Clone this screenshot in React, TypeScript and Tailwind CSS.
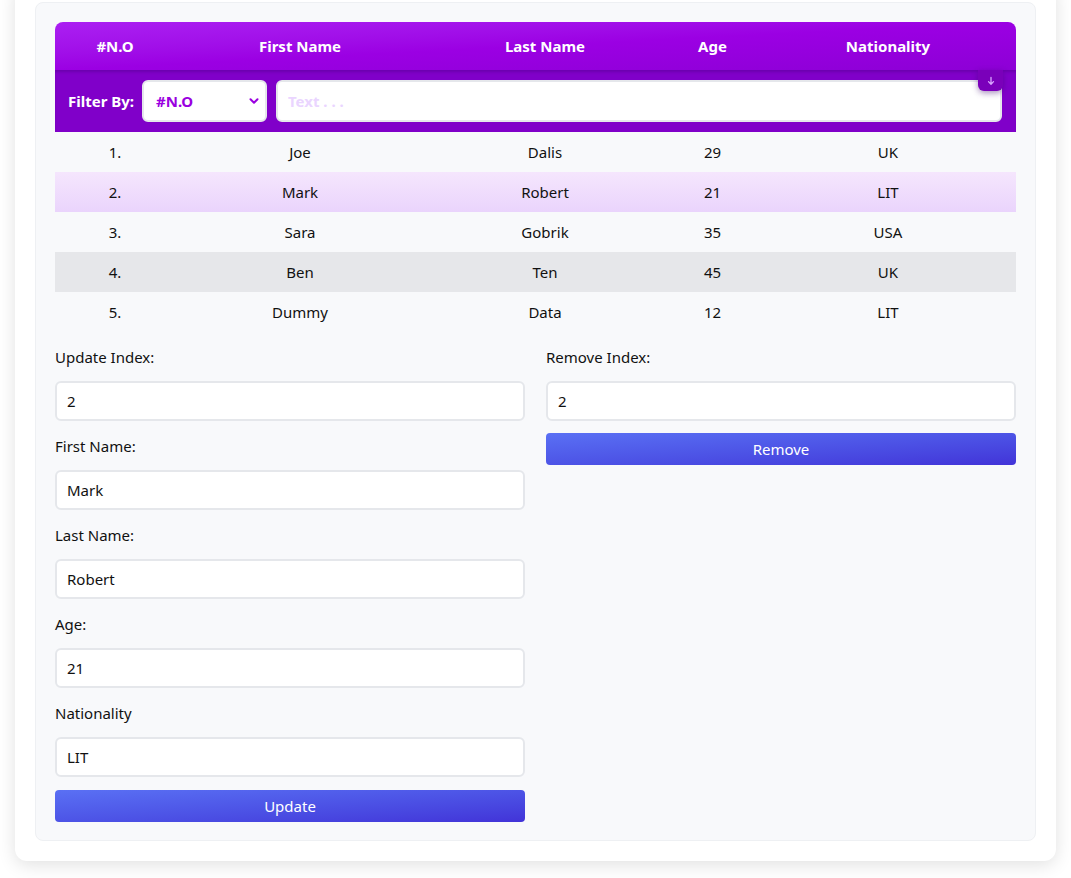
import { useState } from 'react'

type Person = { first: string; last: string; age: number; nat: string }

const PEOPLE: Person[] = [
  { first: 'Joe', last: 'Dalis', age: 29, nat: 'UK' },
  { first: 'Mark', last: 'Robert', age: 21, nat: 'LIT' },
  { first: 'Sara', last: 'Gobrik', age: 35, nat: 'USA' },
  { first: 'Ben', last: 'Ten', age: 45, nat: 'UK' },
  { first: 'Dummy', last: 'Data', age: 12, nat: 'LIT' },
]

const COLS = 'grid grid-cols-[120px_250px_240px_95px_256px]'

const rowBg = (i: number) => {
  if (i === 1) return 'bg-gradient-to-b from-[#f5e6fd] to-[#ead4fc]'
  if (i === 3) return 'bg-[#e6e7ea]'
  return ''
}

function Field({ label, value, last }: { label: string; value: string; last?: boolean }) {
  return (
    <div className="flex flex-col">
      <label className="h-6 leading-6 mb-3 text-[15px] text-[#111]">{label}</label>
      <input
        defaultValue={value}
        className={`h-10 rounded-md border-2 border-[#e5e7eb] bg-white px-2.5 text-[15px] text-[#111] outline-none ${last ? 'mb-[13px]' : 'mb-[13px]'}`}
      />
    </div>
  )
}

export default function App() {
  const [filter, setFilter] = useState('')

  return (
    <div className="min-h-screen bg-white font-['Noto_Sans',sans-serif] pb-[18px]">
      <div className="-mt-[18px] mx-[15px] rounded-xl bg-white p-5 shadow-[0_4px_18px_rgba(0,0,0,0.12)]">
        <div className="rounded-lg border border-[#eef0f3] bg-[#f8f9fb] px-[19px] pt-[19px] pb-[18px]">
          {/* table */}
          <div className="w-[961px]">
            <div className={`${COLS} h-12 items-center rounded-t-lg bg-gradient-to-br from-[#ab1ff2] via-[#9b00e3] to-[#8d00d6] text-[15px] font-bold text-white`}>
              <div className="text-center">#N.O</div>
              <div className="text-center">First Name</div>
              <div className="text-center">Last Name</div>
              <div className="text-center">Age</div>
              <div className="text-center">Nationality</div>
            </div>
            <div className="relative flex h-[62px] items-center bg-[#8000c9] pl-[13px] pr-[14px] shadow-[inset_0_3px_3px_-1px_rgba(80,0,140,0.45)]">
              <span className="mr-2 text-[15px] font-bold text-white">Filter By:</span>
              <div className="relative mr-[9px] w-[125px]">
                <select className="h-[42px] w-full appearance-none rounded-md border-2 border-[#e5e7eb] bg-white pl-3 text-[15px] font-bold text-[#9a00e0] outline-none">
                  <option>#N.O</option>
                  <option>First Name</option>
                  <option>Last Name</option>
                  <option>Age</option>
                  <option>Nationality</option>
                </select>
                <svg className="pointer-events-none absolute right-2 top-1/2 -translate-y-1/2" width="10" height="10" viewBox="0 0 10 10">
                  <path d="M1.5 3.2 L5 6.7 L8.5 3.2" fill="none" stroke="#9a00e0" strokeWidth="2" strokeLinecap="round" strokeLinejoin="round" />
                </svg>
              </div>
              <input
                value={filter}
                onChange={e => setFilter(e.target.value)}
                placeholder="Text . . ."
                className="h-[42px] flex-1 rounded-md border-2 border-[#e5e7eb] bg-white px-2.5 text-[15px] font-bold text-[#9a00e0] outline-none placeholder:text-[#ead5ff]"
              />
              <button className="absolute right-[13px] top-0 flex h-[21px] w-[25px] items-center justify-center rounded-b-md bg-[#7a00ba] shadow-[0_2px_6px_rgba(60,0,110,0.45)]">
                <svg width="10" height="10" viewBox="0 0 10 10">
                  <path d="M5 1.5 V8 M2.5 5.6 L5 8.2 L7.5 5.6" fill="none" stroke="#d9a8ff" strokeWidth="1.3" strokeLinecap="round" strokeLinejoin="round" />
                </svg>
              </button>
            </div>
            {PEOPLE.map((p, i) => (
              <div key={i} className={`${COLS} h-10 items-center text-[15px] text-[#111] ${rowBg(i)}`}>
                <div className="text-center">{i + 1}.</div>
                <div className="text-center">{p.first}</div>
                <div className="text-center">{p.last}</div>
                <div className="text-center">{p.age}</div>
                <div className="text-center">{p.nat}</div>
              </div>
            ))}
          </div>

          {/* forms */}
          <div className="mt-[13px] grid grid-cols-2 gap-x-[21px]">
            <div className="flex flex-col">
              <Field label="Update Index:" value="2" />
              <Field label="First Name:" value="Mark" />
              <Field label="Last Name:" value="Robert" />
              <Field label="Age:" value="21" />
              <Field label="Nationality" value="LIT" last />
              <button className="h-8 rounded bg-gradient-to-br from-[#5a70f4] to-[#4233d8] text-[15px] text-white">Update</button>
            </div>
            <div className="flex flex-col">
              <div className="flex flex-col">
                <label className="h-6 leading-6 mb-3 text-[15px] text-[#111]">Remove Index:</label>
                <input
                  defaultValue="2"
                  className="h-10 rounded-md border-2 border-[#e5e7eb] bg-white px-2.5 text-[15px] text-[#111] outline-none mb-3"
                />
              </div>
              <button className="h-8 rounded bg-gradient-to-br from-[#5a70f4] to-[#4233d8] text-[15px] text-white">Remove</button>
            </div>
          </div>
        </div>
      </div>
    </div>
  )
}
